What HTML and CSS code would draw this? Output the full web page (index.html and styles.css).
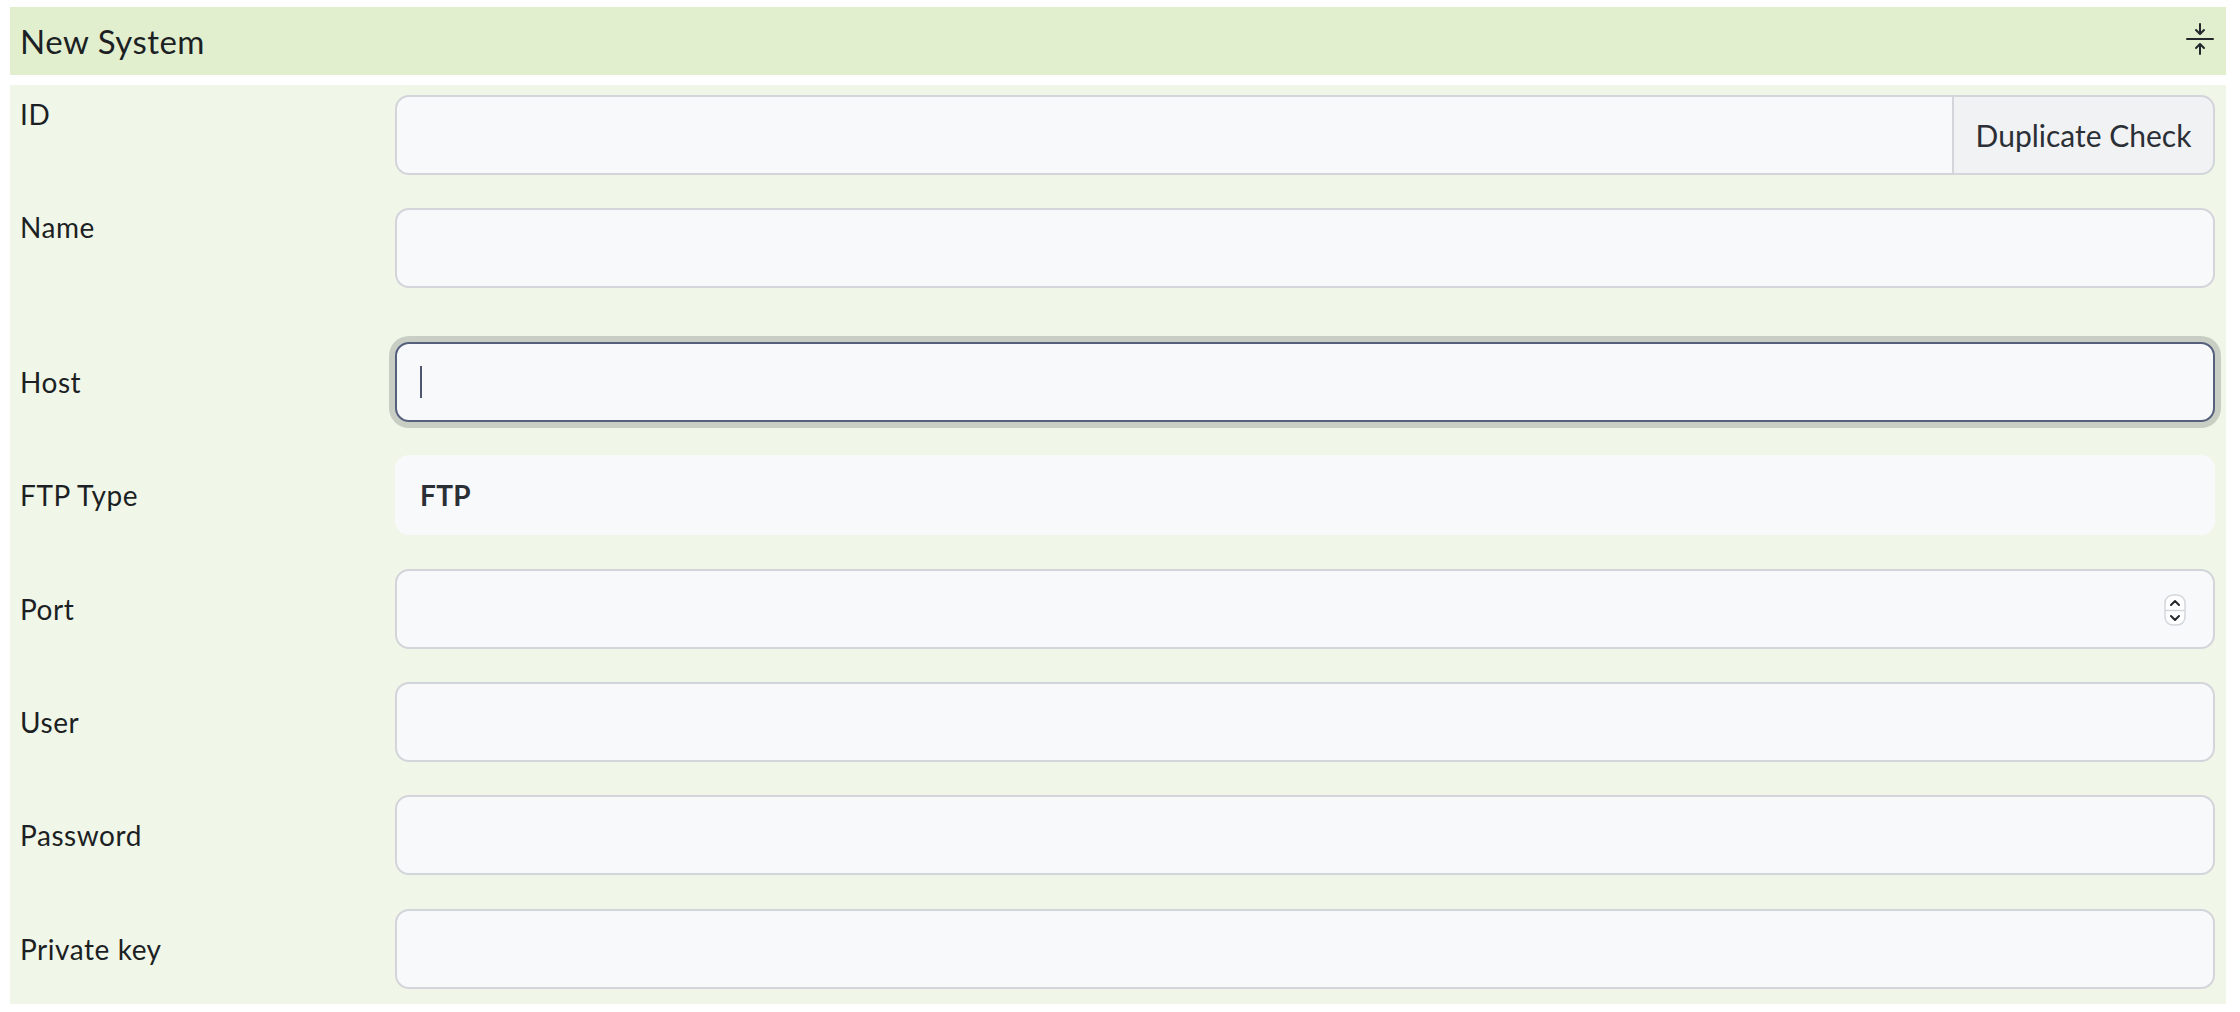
FILE: index.html
```html
<!DOCTYPE html>
<html lang="en">
<head>
    <meta charset="UTF-8">
    <meta name="viewport" content="width=device-width, initial-scale=1.0">
    <title>New System</title>
    <link rel="stylesheet" href="styles.css">
</head>
<body>

<div class="page">
    <div class="panel-head">
        <h1 class="panel-title">New System</h1>
        <svg class="collapse-icon" viewBox="0 0 16 16" fill="currentColor">
            <path fill-rule="evenodd" d="M1 8a.5.5 0 0 1 .5-.5h13a.5.5 0 0 1 0 1h-13A.5.5 0 0 1 1 8m7-8a.5.5 0 0 1 .5.5v3.793l1.146-1.147a.5.5 0 0 1 .708.708l-2 2a.5.5 0 0 1-.708 0l-2-2a.5.5 0 1 1 .708-.708L7.5 4.293V.5A.5.5 0 0 1 8 0m-.5 11.707-1.146 1.147a.5.5 0 0 1-.708-.708l2-2a.5.5 0 0 1 .708 0l2 2a.5.5 0 0 1-.708.708L8.5 11.707V15.5a.5.5 0 0 1-1 0z"/>
        </svg>
    </div>

    <form class="panel-body">
        <div class="form-row top">
            <label class="row-label" for="sysId">ID</label>
            <div class="input-group">
                <input class="field" type="text" id="sysId">
                <button class="btn-check" type="button">Duplicate Check</button>
            </div>
        </div>

        <div class="form-row top name-row">
            <label class="row-label" for="sysName">Name</label>
            <input class="field" type="text" id="sysName">
        </div>

        <div class="form-row">
            <label class="row-label" for="sysHost">Host</label>
            <div class="field-wrap">
                <input class="field focused" type="text" id="sysHost">
                <span class="caret"></span>
            </div>
        </div>

        <div class="form-row">
            <label class="row-label">FTP Type</label>
            <div class="field static">FTP</div>
        </div>

        <div class="form-row">
            <label class="row-label" for="sysPort">Port</label>
            <div class="field-wrap">
                <input class="field" type="number" id="sysPort">
                <svg class="spinner" viewBox="0 0 22 32">
                    <rect x="1" y="1" width="20" height="30" rx="8" fill="#fff" stroke="#d3d6da" stroke-width="1.5"/>
                    <line x1="1" y1="16.5" x2="21" y2="16.5" stroke="#d3d6da" stroke-width="1.5"/>
                    <polyline points="7,11 11,7 15,11" fill="none" stroke="#25282c" stroke-width="2" stroke-linecap="round" stroke-linejoin="round"/>
                    <polyline points="7,22 11,26 15,22" fill="none" stroke="#25282c" stroke-width="2" stroke-linecap="round" stroke-linejoin="round"/>
                </svg>
            </div>
        </div>

        <div class="form-row">
            <label class="row-label" for="sysUser">User</label>
            <input class="field" type="text" id="sysUser">
        </div>

        <div class="form-row">
            <label class="row-label" for="sysPassword">Password</label>
            <input class="field" type="password" id="sysPassword">
        </div>

        <div class="form-row">
            <label class="row-label" for="sysKey">Private key</label>
            <input class="field" type="text" id="sysKey">
        </div>
    </form>
</div>

</body>
</html>
```

FILE: styles.css
```css
body {
    margin: 0;
    padding: 0;
    font-family: Lato, "Open Sans", sans-serif;
    color: #1c1f23;
    background-color: #fff;
}

.page {
    padding: 7px 14px 0 10px;
}

/* header bar */
.panel-head {
    display: flex;
    align-items: center;
    justify-content: space-between;
    height: 68px;
    padding: 0 10px 0 10px;
    background-color: #e2efcf;
    box-sizing: border-box;
}

.panel-title {
    margin: 0;
    font-size: 33px;
    font-weight: 400;
    line-height: 1;
    letter-spacing: 0.5px;
}

.collapse-icon {
    width: 32px;
    height: 32px;
    margin-top: -4px;
    color: #24272b;
}

/* form body */
.panel-body {
    display: flex;
    flex-direction: column;
    gap: 33.4px;
    margin: 10px 0 0;
    padding: 10px 11px 15px;
    background-color: #f0f6e8;
}

.form-row {
    display: flex;
    align-items: center;
}

.form-row.top {
    align-items: flex-start;
}

.name-row {
    margin-bottom: 20px;
}

.row-label {
    flex: none;
    width: 375px;
    margin-left: -1px;
    font-size: 28px;
    line-height: 36px;
    letter-spacing: 0.55px;
}

.form-row.top .row-label {
    padding-top: 1px;
}

.field {
    flex: 1;
    min-width: 0;
    height: 80px;
    box-sizing: border-box;
    padding: 0 23px;
    border: 2px solid #d2d5da;
    border-radius: 14px;
    background-color: #f8f9fb;
    font-family: inherit;
    font-size: 28px;
    color: #212529;
    outline: none;
}

.field.focused {
    border-color: #56607d;
    box-shadow: 0 0 0 6px #c9cec4;
    caret-color: transparent;
}

.field.static {
    display: flex;
    align-items: center;
    border-color: #f8f9fb;
    font-weight: 700;
    color: #2b2f36;
    letter-spacing: 0.3px;
}

.field[type="number"] {
    -moz-appearance: textfield;
}

.field::-webkit-inner-spin-button,
.field::-webkit-outer-spin-button {
    -webkit-appearance: none;
    margin: 0;
}

.input-group {
    flex: 1;
    display: flex;
    min-width: 0;
}

.input-group .field {
    border-right: none;
    border-radius: 14px 0 0 14px;
}

.btn-check {
    flex: none;
    width: 263px;
    height: 80px;
    border: 2px solid #d2d5da;
    border-radius: 0 14px 14px 0;
    background-color: #f1f2f4;
    font-family: inherit;
    font-size: 30px;
    color: #2b2f36;
    cursor: pointer;
}

.field-wrap {
    flex: 1;
    display: flex;
    position: relative;
    min-width: 0;
}

.caret {
    position: absolute;
    left: 25px;
    top: 50%;
    width: 2px;
    height: 32px;
    margin-top: -16px;
    background-color: #4f5770;
}

.spinner {
    position: absolute;
    right: 29px;
    top: 50%;
    width: 22px;
    height: 32px;
    margin-top: -15px;
}
```
